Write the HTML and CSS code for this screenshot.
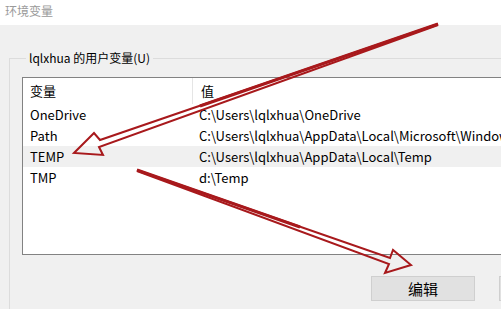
FILE: index.html
```html
<!DOCTYPE html>
<html lang="zh-CN">
<head>
    <meta charset="UTF-8">
    <meta name="viewport" content="width=device-width, initial-scale=1.0">
    <title>环境变量</title>
    <link rel="stylesheet" href="styles.css">
</head>
<body>
    <div class="window">
        <div class="titlebar">环境变量</div>
        <div class="content">
            <fieldset class="group">
                <legend>lqlxhua 的用户变量(U)</legend>
                <div class="list">
                    <div class="row head">
                        <div class="cell name">变量</div>
                        <div class="cell value">值</div>
                    </div>
                    <div class="row">
                        <div class="cell name">OneDrive</div>
                        <div class="cell value">C:\Users\lqlxhua\OneDrive</div>
                    </div>
                    <div class="row">
                        <div class="cell name">Path</div>
                        <div class="cell value">C:\Users\lqlxhua\AppData\Local\Microsoft\Windows</div>
                    </div>
                    <div class="row selected">
                        <div class="cell name">TEMP</div>
                        <div class="cell value">C:\Users\lqlxhua\AppData\Local\Temp</div>
                    </div>
                    <div class="row">
                        <div class="cell name">TMP</div>
                        <div class="cell value">d:\Temp</div>
                    </div>
                </div>
                <div class="buttons">
                    <button class="btn">编辑</button>
                    <span class="btn next"></span>
                </div>
            </fieldset>
        </div>

        <!-- 红色标注箭头 -->
        <svg class="arrows" width="501" height="309" viewBox="0 0 501 309">
            <g fill="none" stroke="#a8191c" stroke-width="2" stroke-linejoin="miter">
                <path d="M438 24 L100 140 L94 133 L74 153 L103 155 L99 147 L438 25" />
                <path d="M137 170 L390 258 L393 250 L411 265 L385 273 L389 264 L137 171" />
            </g>
            <path d="M438 24 L200 106" stroke="#a8191c" stroke-width="3" fill="none" />
            <path d="M137 170 L300 227" stroke="#a8191c" stroke-width="3" fill="none" />
        </svg>
    </div>
</body>
</html>
```

FILE: styles.css
```css
body {
    margin: 0;
    font-family: "Noto Sans CJK SC", "Noto Sans", sans-serif;
    font-size: 13px;
    color: #000;
}
.window {
    position: relative;
    width: 501px;
    height: 309px;
    overflow: hidden;
    background: #f0f0f0;
}
.titlebar {
    height: 25px;
    line-height: 22px;
    padding-left: 5px;
    background: #fff;
    color: #9a9a9a;
    font-size: 12px;
}
.content {
    padding: 26px 0 0 9px;
}
.group {
    margin: 0;
    width: 520px;
    padding: 10px 0 0 12px;
    border: 1px solid #dcdcdc;
    border-right: none;
    border-bottom: none;
    min-inline-size: 0;
}
.group legend {
    padding: 0 3px;
    margin-left: 4px;
    font-size: 12px;
    line-height: 14px;
}
.list {
    height: 176px;
    margin-top: 2px;
    background: #fff;
    border: 1px solid #828282;
    border-right: none;
}
.row {
    display: flex;
    height: 21px;
    line-height: 21px;
    white-space: nowrap;
}
.row.head {
    height: 26px;
    line-height: 26px;
}
.row.selected {
    background: #f0f0f0;
}
.cell {
    padding-left: 7px;
}
.name {
    width: 162px;
    flex-shrink: 0;
}
.head .name {
    border-right: 1px solid #e5e5e5;
}
.head .value {
    padding-left: 8px;
}
.buttons {
    display: flex;
    align-items: flex-start;
    gap: 24px;
    padding: 21px 0 20px 349px;
}
.btn {
    display: block;
    flex-shrink: 0;
    box-sizing: border-box;
    width: 104px;
    height: 25px;
    background: #e1e1e1;
    border: 1px solid #cfcfcf;
    font-family: inherit;
    font-size: 15px;
    color: #000;
    padding: 0;
}
.arrows {
    position: absolute;
    left: 0;
    top: 0;
}
```
